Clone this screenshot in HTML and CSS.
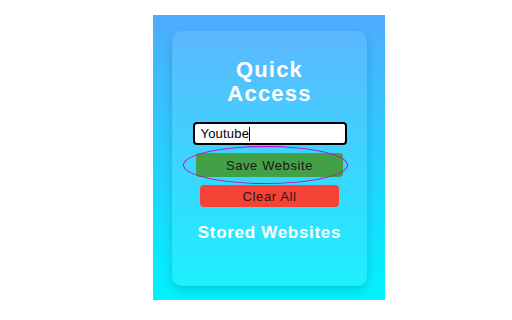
FILE: index.html
```html
<!DOCTYPE html>
<html lang="en">
  <head>
    <meta charset="UTF-8" />
    <meta name="viewport" content="width=device-width, initial-scale=1.0" />
    <title>Quick Access</title>
    <link rel="stylesheet" href="styles.css">
  </head>
  <body>
    <div class="app">
      <div class="card">
        <h1 class="title">Quick<br />Access</h1>
        <div class="field">
          <span class="field-text">Youtube</span><span class="caret"></span>
        </div>
        <div class="save-wrap">
          <button class="btn btn-save">Save Website</button>
          <span class="ring"></span>
        </div>
        <button class="btn btn-clear">Clear All</button>
        <h2 class="subtitle">Stored Websites</h2>
        <ul class="list"></ul>
      </div>
    </div>
  </body>
</html>
```
FILE: styles.css
```css
body {
  margin: 0;
  font-family: "Liberation Sans", Arial, sans-serif;
  background: #ffffff;
}
.app {
  box-sizing: border-box;
  width: 232px;
  height: 285px;
  margin: 15px 0 0 153px;
  padding: 16px 18px 14px 19px;
  background: linear-gradient(#4facfe, #00f2fe);
}
.card {
  box-sizing: border-box;
  height: 100%;
  display: flex;
  flex-direction: column;
  align-items: center;
  padding-top: 27px;
  border-radius: 10px;
  background: rgba(255, 255, 255, 0.1);
  box-shadow: 0 4px 10px rgba(0, 0, 0, 0.15);
}
.title {
  margin: 0;
  font-size: 22px;
  line-height: 24px;
  letter-spacing: 1.2px;
  color: #ffffff;
  text-align: center;
}
.field {
  box-sizing: border-box;
  width: 154px;
  height: 23px;
  margin-top: 16px;
  padding: 0 6px;
  display: flex;
  align-items: center;
  background: #ffffff;
  border: 2px solid #000000;
  border-radius: 4px;
  font-size: 13px;
  letter-spacing: 0.2px;
  color: #000000;
}
.caret {
  width: 1px;
  height: 14px;
  background: #000000;
}
.save-wrap {
  position: relative;
  margin-top: 8px;
}
.btn {
  display: block;
  border: none;
  border-radius: 4px;
  font-family: "Liberation Sans", Arial, sans-serif;
  font-size: 13px;
  letter-spacing: 0.6px;
  color: #1a1a1a;
  padding: 0;
}
.btn-save {
  width: 147px;
  height: 24px;
  background: #43a047;
}
.ring {
  position: absolute;
  left: -13px;
  top: -7px;
  width: 165px;
  height: 38px;
  box-sizing: border-box;
  border: 1px solid #c800c8;
  border-radius: 50%;
}
.btn-clear {
  width: 139px;
  height: 22px;
  margin-top: 8px;
  background: #f44336;
}
.subtitle {
  margin: 16px 0 0;
  font-size: 17px;
  line-height: 20px;
  letter-spacing: 0.7px;
  color: #ffffff;
}
.list {
  margin: 0;
  padding: 0;
  list-style: none;
}
```
